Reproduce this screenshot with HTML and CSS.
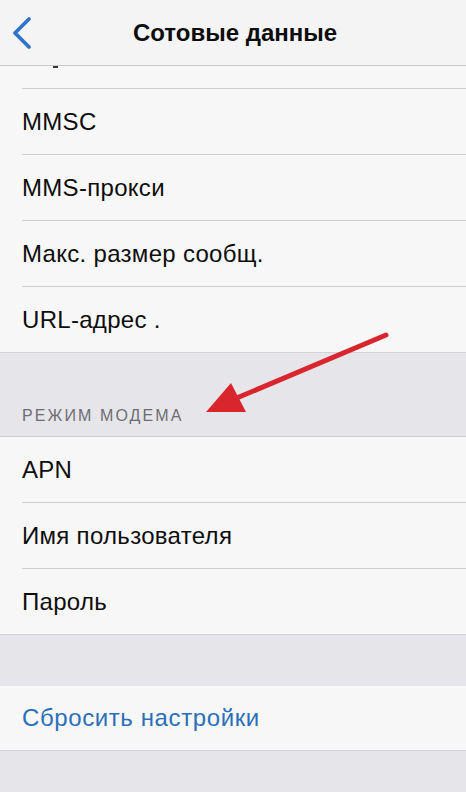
FILE: index.html
```html
<!DOCTYPE html>
<html lang="ru">
<head>
    <meta charset="UTF-8">
    <meta name="viewport" content="width=device-width, initial-scale=1.0">
    <title>Сотовые данные</title>
    <link rel="stylesheet" href="styles.css">
</head>
<body>
    <header class="navbar">
        <a class="back" href="#">
            <svg width="24" height="34" viewBox="0 0 24 34">
                <path d="M19 3 L5 17 L19 31" fill="none" stroke="#2f74c8" stroke-width="3.8" stroke-linecap="round" stroke-linejoin="round"/>
            </svg>
        </a>
        <h1>Сотовые данные</h1>
    </header>

    <main>
        <div class="group">
            <div class="row row-cut"><span class="cut-mark"></span></div>
            <div class="row">MMSC</div>
            <div class="row">MMS-прокси</div>
            <div class="row">Макс. размер сообщ.</div>
            <div class="row">URL-адрес .</div>
        </div>

        <div class="section-title">Режим модема</div>

        <div class="group">
            <div class="row">APN</div>
            <div class="row">Имя пользователя</div>
            <div class="row">Пароль</div>
        </div>

        <div class="spacer"></div>

        <div class="group">
            <div class="row row-link">Сбросить настройки</div>
        </div>
    </main>

    <!-- annotation arrow -->
    <svg class="arrow" width="466" height="792" viewBox="0 0 466 792">
        <line x1="386" y1="335" x2="232" y2="400" stroke="#d9262e" stroke-width="5" stroke-linecap="round"/>
        <polygon points="206,412 231,383 246,412" fill="#d9262e"/>
    </svg>
</body>
</html>
```

FILE: styles.css
```css
body {
    font-family: "Liberation Sans", Arial, sans-serif;
    background-color: #e6e6ea;
    color: #0d0d0d;
    margin: 0;
    padding: 0;
    width: 466px;
    height: 792px;
    overflow: hidden;
    position: relative;
}

.navbar {
    height: 65px;
    background-color: #f4f4f4;
    border-bottom: 1px solid #c9c9cd;
    display: flex;
    align-items: center;
    justify-content: center;
    position: relative;
}

.navbar h1 {
    margin: 0 0 0 4px;
    font-size: 24px;
    font-weight: bold;
    color: #0d0d0d;
}

.back {
    position: absolute;
    left: 10px;
    top: 16px;
    display: block;
    line-height: 0;
}

.group {
    background-color: #f7f7f7;
    border-bottom: 1px solid #d2d2d6;
}

.row {
    height: 65px;
    margin-left: 22px;
    border-bottom: 1px solid #d0d0d4;
    display: flex;
    align-items: center;
    font-size: 24px;
    letter-spacing: 0.3px;
}

.row:last-child {
    border-bottom: none;
}

.row-cut {
    height: 22px;
    align-items: flex-start;
}

.cut-mark {
    width: 5px;
    height: 2px;
    margin-left: 31px;
    background-color: #333;
}

.row-link {
    height: 64px;
    color: #2a6fb8;
    letter-spacing: 0.6px;
}

.section-title {
    height: 84px;
    box-sizing: border-box;
    padding: 0 0 11px 22px;
    display: flex;
    align-items: flex-end;
    font-size: 16px;
    letter-spacing: 2.1px;
    text-transform: uppercase;
    color: #6d6d72;
    border-bottom: 1px solid #d0d0d4;
}

.spacer {
    height: 51px;
}

.arrow {
    position: absolute;
    left: 0;
    top: 0;
    pointer-events: none;
}
```
